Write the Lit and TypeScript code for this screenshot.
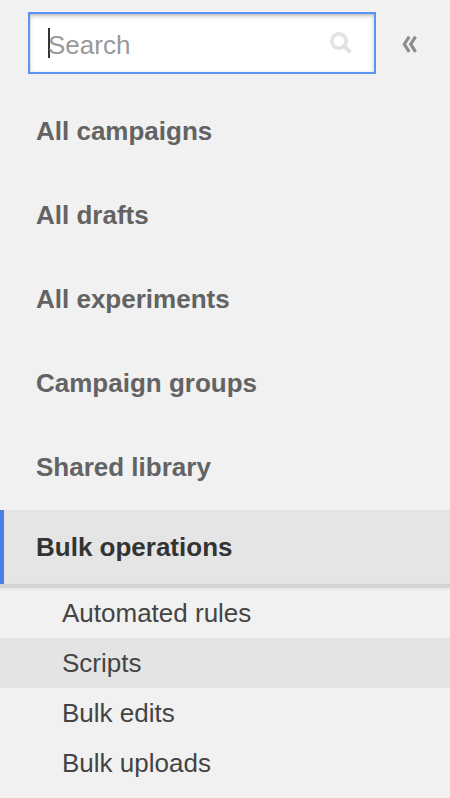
import { LitElement, html, css } from "lit";
import { customElement, state } from "lit/decorators.js";
import { classMap } from "lit/directives/class-map.js";

@customElement("app-root")
export class AppRoot extends LitElement {
  static styles = css`
    :host {
      display: block;
      box-sizing: border-box;
      height: 798px;
      overflow: hidden;
      background: #f1f1f1;
      font: 26px/30px "Liberation Sans", Arial, sans-serif;
      color: #444;
    }
    .top {
      display: flex;
      align-items: center;
      padding: 12px 0 0 28px;
    }
    .search {
      box-sizing: border-box;
      width: 348px;
      height: 62px;
      display: flex;
      align-items: center;
      padding: 0 21px 0 18px;
      border: 2px solid #5b93f7;
      background: #fff;
      box-shadow: inset 0 3px 4px -1px rgba(0, 0, 0, 0.24), inset 0 0 3px rgba(0, 0, 0, 0.12);
    }
    .caret {
      width: 2px;
      height: 30px;
      margin-right: -2px;
      background: #333;
    }
    .placeholder {
      flex: 1;
      padding-top: 3px;
      color: #999;
    }
    .glass {
      width: 26px;
      height: 26px;
      display: block;
    }
    .collapse {
      margin-left: 24px;
      width: 20px;
      height: 20px;
      display: block;
    }
    .nav {
      padding: 15px 0 1px;
    }
    .item {
      padding-left: 36px;
      line-height: 84px;
      font-weight: bold;
      color: #636363;
    }
    .section {
      padding-left: 32px;
      border-left: 4px solid #4a7fe5;
      line-height: 74px;
      font-weight: bold;
      color: #333;
      background: #e5e5e5;
    }
    .rule {
      height: 4px;
      background: #d5d5d5;
      box-shadow: 0 1px 3px rgba(0, 0, 0, 0.07);
    }
    .sub {
      padding-left: 62px;
      line-height: 50px;
    }
    .current {
      background: #e4e4e4;
    }
  `;

  @state() private current = "Scripts";

  private items = ["All campaigns", "All drafts", "All experiments", "Campaign groups", "Shared library"];
  private subs = ["Automated rules", "Scripts", "Bulk edits", "Bulk uploads"];

  render() {
    return html`
      <div class="top">
        <div class="search">
          <span class="caret"></span>
          <span class="placeholder">Search</span>
          <svg class="glass" viewBox="0 0 26 26" fill="none" stroke="#e3e3e3">
            <circle cx="12" cy="11" r="7.2" stroke-width="3.8" />
            <path d="M17 16.2l6.4 6.1" stroke-width="4" />
          </svg>
        </div>
        <svg class="collapse" viewBox="0 0 20 20" fill="none" stroke="#8c8c8c" stroke-width="3.1">
          <path d="M9.2 3.6L4.3 11.2l4.9 7.6M15.6 3.6l-4.9 7.6 4.9 7.6" />
        </svg>
      </div>
      <div class="nav">${this.items.map((t) => html`<div class="item">${t}</div>`)}</div>
      <div class="section">Bulk operations</div>
      <div class="rule"></div>
      ${this.subs.map(
        (t) => html`<div
          class=${classMap({ sub: true, current: t === this.current })}
          @click=${() => (this.current = t)}
        >${t}</div>`
      )}
    `;
  }
}
